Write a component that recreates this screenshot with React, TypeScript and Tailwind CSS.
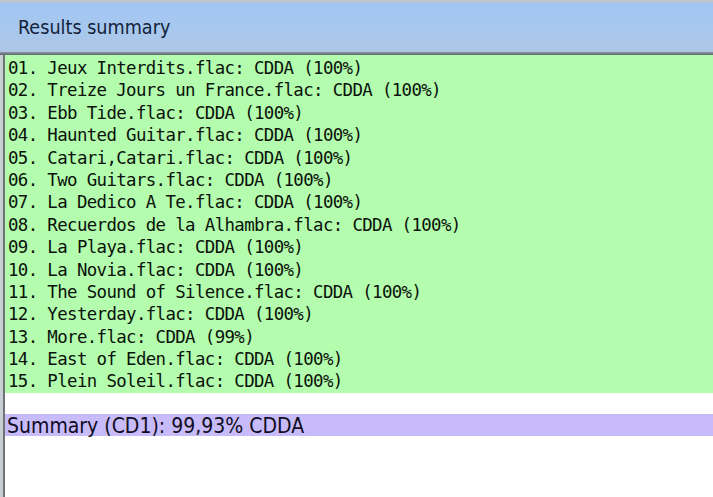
import React from "react";

const tracks: string[] = [
  "01. Jeux Interdits.flac: CDDA (100%)",
  "02. Treize Jours un France.flac: CDDA (100%)",
  "03. Ebb Tide.flac: CDDA (100%)",
  "04. Haunted Guitar.flac: CDDA (100%)",
  "05. Catari,Catari.flac: CDDA (100%)",
  "06. Two Guitars.flac: CDDA (100%)",
  "07. La Dedico A Te.flac: CDDA (100%)",
  "08. Recuerdos de la Alhambra.flac: CDDA (100%)",
  "09. La Playa.flac: CDDA (100%)",
  "10. La Novia.flac: CDDA (100%)",
  "11. The Sound of Silence.flac: CDDA (100%)",
  "12. Yesterday.flac: CDDA (100%)",
  "13. More.flac: CDDA (99%)",
  "14. East of Eden.flac: CDDA (100%)",
  "15. Plein Soleil.flac: CDDA (100%)",
];

const App: React.FC = () => {
  return (
    <div className="flex h-[497px] w-[713px] flex-col overflow-hidden bg-white">
      {/* panel header */}
      <header className="flex h-[55px] shrink-0 flex-col">
        <div className="h-[3px] bg-[#bcc6d0]" />
        <div className="flex h-[49px] items-center bg-gradient-to-b from-[#a2c5f3] via-[#a6c8ee] to-[#aec6e4] pl-[18px]">
          <span className="font-['DejaVu_Sans_Condensed','Liberation_Sans',sans-serif] text-[19.6px] leading-none text-[#14223a]">
            Results summary
          </span>
        </div>
        <div className="h-[3px] bg-gradient-to-b from-[#8d98a4] to-[#5f6870]" />
      </header>

      <div className="flex flex-1">
        <div className="w-[3px] shrink-0 bg-[#c9ced4]" />
        <div className="w-[2px] shrink-0 bg-[#6e7378]" />
        <div className="flex flex-1 flex-col">
          <ul className="bg-[#b4fcae] pt-[2px]">
            {tracks.map((t) => (
              <li
                key={t}
                className="h-[22.4px] whitespace-pre pl-[3px] font-['DejaVu_Sans_Mono',monospace] text-[17.4px] leading-[22.4px] tracking-[-0.63px] text-[#0a120a]"
              >
                {t}
              </li>
            ))}
          </ul>
          <div className="h-[21px]" />
          <div className="h-[22px] bg-[#c8bbf9] pl-[2px] pt-px font-['DejaVu_Sans_Condensed','Liberation_Sans',sans-serif] text-[21px] leading-[22px] text-[#100c22]">
            Summary (CD1): 99,93% CDDA
          </div>
        </div>
      </div>
    </div>
  );
};

export default App;
